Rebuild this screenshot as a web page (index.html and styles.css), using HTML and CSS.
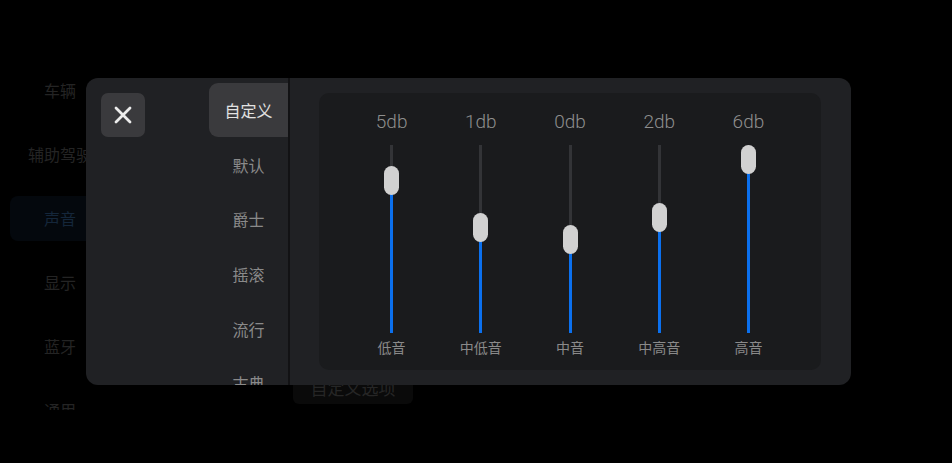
FILE: index.html
```html
<!DOCTYPE html>
<html lang="zh-CN">
<head>
<meta charset="utf-8">
<title>声音 - 均衡器</title>
<link rel="stylesheet" href="styles.css">
</head>
<body>
<div class="screen">
  <aside class="nav">
    <div class="nav-item"><span class="nav-label">车辆</span></div>
    <div class="nav-item"><span class="nav-label">辅助驾驶</span></div>
    <div class="nav-item active"><span class="nav-label">声音</span></div>
    <div class="nav-item"><span class="nav-label">显示</span></div>
    <div class="nav-item"><span class="nav-label">蓝牙</span></div>
    <div class="nav-item"><span class="nav-label">通用</span></div>
  </aside>
  <main class="content">
    <button class="ghost-btn">自定义选项</button>
  </main>

  <div class="modal">
    <div class="modal-side">
      <button class="close-btn" aria-label="关闭">
        <svg width="18" height="18" viewBox="0 0 18 18"><path d="M2 2 L16 16 M16 2 L2 16" stroke="#ececec" stroke-width="2.8" stroke-linecap="round" fill="none"/></svg>
      </button>
    </div>
    <nav class="presets">
      <div class="preset selected">自定义</div>
      <div class="preset">默认</div>
      <div class="preset">爵士</div>
      <div class="preset">摇滚</div>
      <div class="preset">流行</div>
      <div class="preset">古典</div>
    </nav>
    <div class="divider"></div>
    <section class="eq-area">
      <div class="eq-panel">
        <div class="band">
          <div class="db">5db</div>
          <div class="track" style="--top:21px"><div class="fill"></div><div class="thumb"></div></div>
          <div class="band-name">低音</div>
        </div>
        <div class="band">
          <div class="db">1db</div>
          <div class="track" style="--top:68px"><div class="fill"></div><div class="thumb"></div></div>
          <div class="band-name">中低音</div>
        </div>
        <div class="band">
          <div class="db">0db</div>
          <div class="track" style="--top:80px"><div class="fill"></div><div class="thumb"></div></div>
          <div class="band-name">中音</div>
        </div>
        <div class="band">
          <div class="db">2db</div>
          <div class="track" style="--top:58px"><div class="fill"></div><div class="thumb"></div></div>
          <div class="band-name">中高音</div>
        </div>
        <div class="band">
          <div class="db">6db</div>
          <div class="track" style="--top:0px"><div class="fill"></div><div class="thumb"></div></div>
          <div class="band-name">高音</div>
        </div>
      </div>
    </section>
  </div>
</div>
</body>
</html>
```

FILE: styles.css
```css
* { box-sizing: border-box; }
html, body {
  margin: 0;
  padding: 0;
  background: #000;
}
body {
  width: 952px;
  height: 463px;
  overflow: hidden;
  font-family: "Noto Sans CJK SC", "Noto Sans", sans-serif;
}
.screen {
  position: relative;
  width: 952px;
  height: 463px;
  display: flex;
}

/* background nav */
.nav {
  width: 110px;
  margin-top: 58px;
  height: 352px;
  padding-left: 10px;
  overflow: hidden;
  flex-shrink: 0;
}
.nav-item {
  height: 64px;
  display: flex;
  align-items: center;
  justify-content: center;
  font-size: 16px;
  color: #242424;
  position: relative;
}
.nav-item.active {
  color: #14263a;
}
.nav-item.active::before {
  content: "";
  position: absolute;
  left: 0;
  right: 0;
  top: 10px;
  height: 45px;
  border-radius: 8px;
  background: #04080d;
}
.nav-label { position: relative; }

.content {
  flex: 1;
  padding: 370px 0 0 183px;
}
.ghost-btn {
  width: 120px;
  height: 34px;
  border: none;
  border-radius: 6px;
  background: #0a0a0a;
  color: #262626;
  font-family: "Noto Sans CJK SC", sans-serif;
  font-size: 17px;
  padding: 0;
}

/* modal */
.modal {
  position: absolute;
  left: 86px;
  top: 78px;
  width: 765px;
  height: 307px;
  border-radius: 12px;
  background: #202124;
  display: flex;
  overflow: hidden;
}
.modal-side {
  width: 123px;
  padding: 15px;
  flex-shrink: 0;
}
.close-btn {
  width: 44px;
  height: 44px;
  border: none;
  border-radius: 7px;
  background: #3a3a3d;
  display: flex;
  align-items: center;
  justify-content: center;
  padding: 0;
}
.presets {
  width: 79px;
  padding-top: 5px;
  flex-shrink: 0;
}
.preset {
  height: 54.6px;
  display: flex;
  align-items: center;
  justify-content: center;
  font-size: 16px;
  color: #8a8a8a;
}
.preset.selected {
  background: #3a3a3d;
  color: #e2e2e2;
  border-radius: 9px 0 0 9px;
  height: 54px;
  margin-bottom: 0.6px;
}
.divider {
  width: 2px;
  background: #121214;
  flex-shrink: 0;
}
.eq-area {
  flex: 1;
  padding: 15px 30px 15px 29px;
}
.eq-panel {
  height: 277px;
  border-radius: 10px;
  background: #1a1b1d;
  display: flex;
  padding: 18px 28px 0 28px;
}
.band {
  flex: 1;
  display: flex;
  flex-direction: column;
  align-items: center;
}
.db {
  font-family: Roboto, "Noto Sans", sans-serif;
  font-weight: 300;
  font-size: 19px;
  line-height: 22px;
  height: 22px;
  color: #8e8e8e;
}
.track {
  position: relative;
  margin-top: 12px;
  width: 3px;
  height: 188px;
  background: #333437;
}
.fill {
  position: absolute;
  left: 0;
  right: 0;
  bottom: 0;
  top: calc(var(--top) + 14px);
  background: #0b70ee;
}
.thumb {
  position: absolute;
  left: 50%;
  top: var(--top);
  width: 15px;
  height: 29px;
  margin-left: -7.5px;
  border-radius: 7.5px;
  background: #d1d1d1;
}
.band-name {
  margin-top: 4px;
  font-size: 14px;
  line-height: 20px;
  color: #8a8a8a;
}
```
